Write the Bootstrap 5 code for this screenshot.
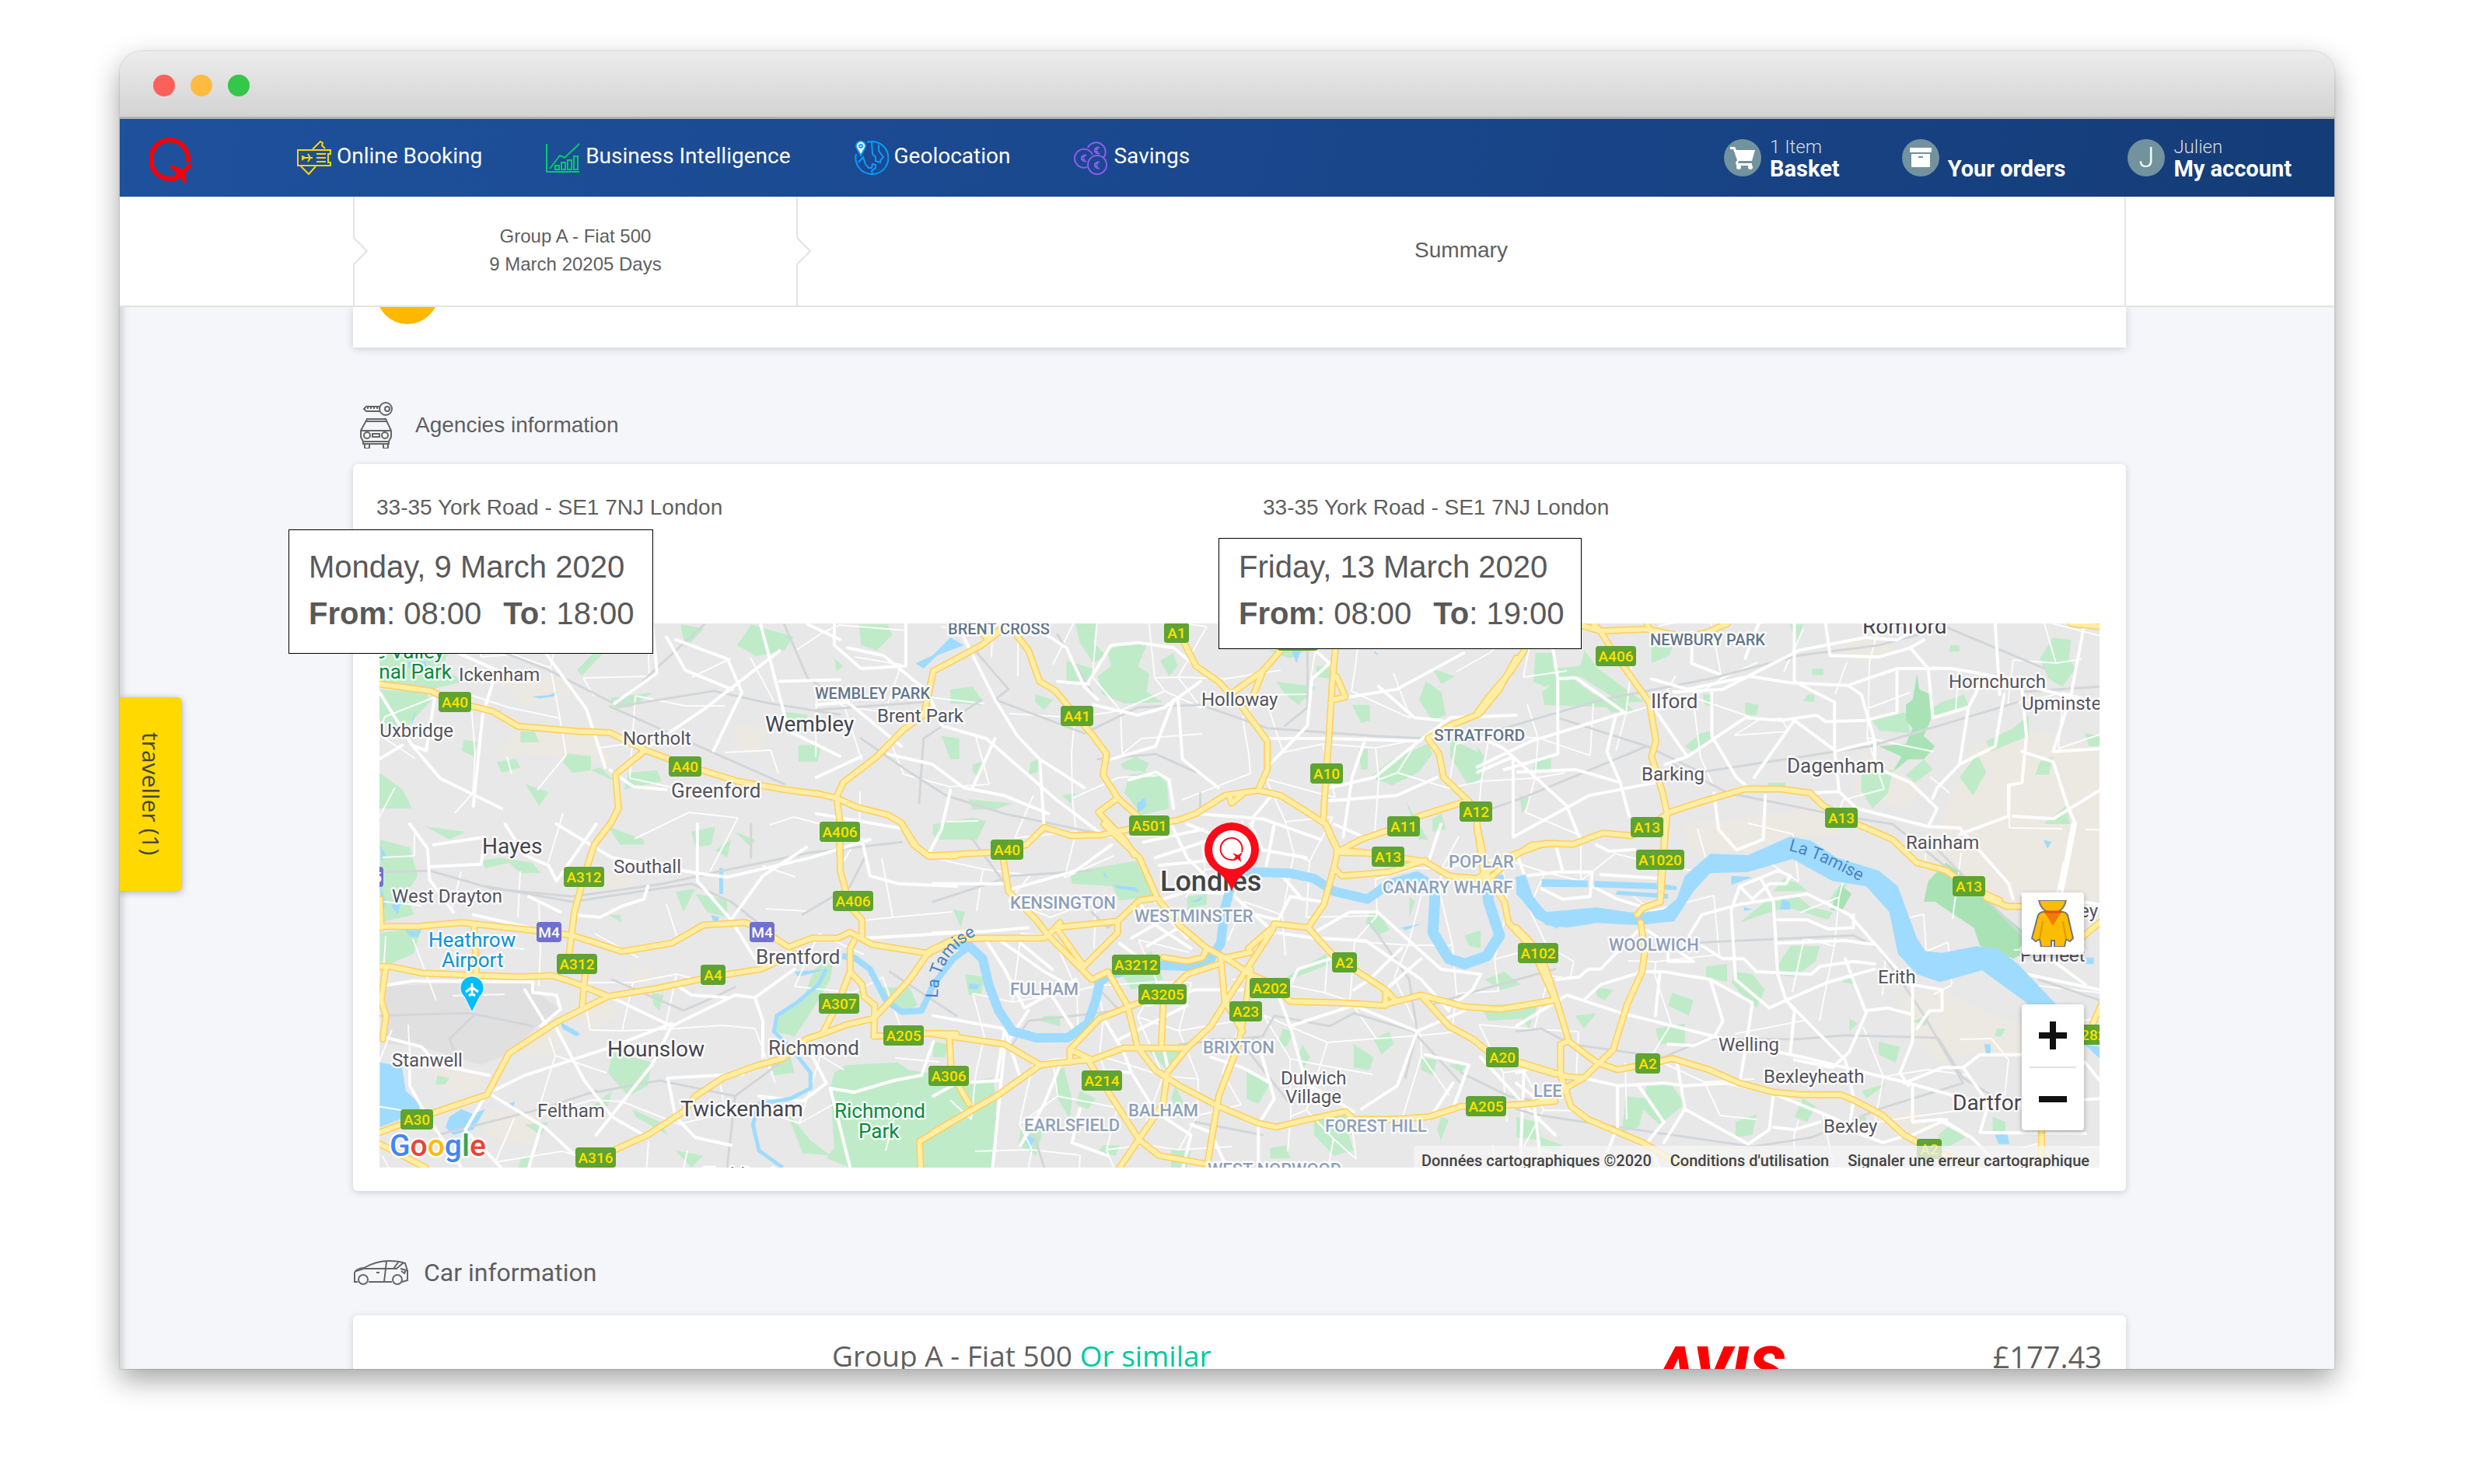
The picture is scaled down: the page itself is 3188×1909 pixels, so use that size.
<!DOCTYPE html>
<html lang="en">
<head>
<meta charset="utf-8">
<meta name="viewport" content="width=device-width, initial-scale=1">
<title>Booking summary</title>
<link href="https://cdn.jsdelivr.net/npm/bootstrap@5.3.0/dist/css/bootstrap.min.css" rel="stylesheet">
<style>
body{background:#fff;color:#5f5f5f;font-family:"Liberation Sans",Arial,sans-serif;font-size:28px;line-height:42px}
.desk{height:100vh;padding:66px 186px 148px 154px}
.win{border-radius:28px 28px 0 0;box-shadow:0 14px 36px rgba(0,0,0,.36),0 0 2px rgba(0,0,0,.3)}
.titlebar{height:87px;padding:4px 43px 0;gap:20px;background:linear-gradient(#ececec,#d3d3d3);border-bottom:3px solid #b3b3b3}
.dot{width:28px;height:28px;border-radius:50%;background:#fc605b}
.dot-min{background:#fdbc40}.dot-max{background:#34c749}
.topnav{height:100px;padding:0 55px 0 38px;background:linear-gradient(105deg,#1e519c,#19458a 60%,#143c77);font-family:Roboto,sans-serif}
.topnav a{color:#fff;text-decoration:none}
.mainlinks{margin-left:134px;gap:82px}
.mainlinks a{gap:7px;line-height:28px}
.mainlinks span{padding-bottom:5px}
.userlinks{gap:80px}
.userlinks a{gap:11px;font-size:29px;line-height:28px;font-weight:700}
.userlinks small{font-size:24px;font-weight:300;color:#d8dbe2;display:block}
.disc{width:48px;height:48px;border-radius:50%;background:#72929e}
.initial{font-size:36px;font-weight:300}
.steps{border-bottom:2px solid #e3e3e3;background:#fff;padding-left:32px;height:142px}
.wrap{width:100%;max-width:2280px;margin:0 auto;display:flow-root}
.steps .wrap{display:flex}
.step{border-left:2px solid #e4e4e4;text-align:center;padding-bottom:2px}
.step-last{border-right:2px solid #e4e4e4}
.step svg{position:absolute;left:-2px;top:50%;margin-top:-17px}
.step p{font-size:24px;line-height:36px;margin:0}
.view{background:#f5f6fa;box-shadow:inset 10px 0 10px -6px rgba(0,0,0,.16);padding-left:32px}
.panel{background:#fff;border-radius:6px;box-shadow:0 2px 10px rgba(30,30,60,.18)}
.panel-top{display:flow-root;height:52px;padding:0 30px;border-radius:0}
.coin{width:80px;height:80px;border-radius:50%;background:#ffb700;margin-top:-58px}
.sect{height:60px;margin:70px 0 20px}
.sect h2{font-size:28px;line-height:42px;margin:0;font-weight:400}
.sect-car{height:70px;gap:20px}
.sect-car h2{font-family:Roboto,sans-serif;font-size:32px}
.agency{height:205px;padding:35px 30px 0}
.datebox{position:absolute;z-index:2;top:84px;left:-83px;border:1px solid #000;background:#fff;color:#595959;font-size:40px;line-height:60px;padding:17px 25px 21px;width:469px;white-space:nowrap}
.datebox-b{top:95px;left:-27px;padding:6px 25px 15px;width:467px}
.datebox span{margin-left:28px}
.mapbox{margin:0 34px;height:700px;background:#e8e8e8;overflow:hidden}
.mapbox>svg{width:100%;height:100%;display:block}
.mapwrap{padding-bottom:30px}
.ctl{position:absolute;right:20px;width:80px;background:#fff;border-radius:4px;box-shadow:0 2px 6px rgba(0,0,0,.3)}
.ctl button{border:0;background:none;width:80px;height:80px;padding:0;display:flex;align-items:center;justify-content:center}
.ctl-man{top:346px}.ctl-zoom{top:490px}
.ctl hr{margin:0 10px;border-top:2px solid #e2e2e2;opacity:1}
.credits{position:absolute;right:0;bottom:0;height:28px;padding:0 13px 0 10px;gap:24px;background:rgba(245,245,245,.75);font:500 20px/38px Roboto,sans-serif}
.credits a,.credits span{color:#444;text-decoration:none;white-space:nowrap}
.tab{position:absolute;left:0;top:831px;width:80px;height:249px;border:0;border-radius:0 6px 6px 0;background:#ffd900;color:#444;font:30px/80px "Open Sans",sans-serif;writing-mode:vertical-rl;text-align:center;box-shadow:0 2px 10px rgba(0,0,0,.3);padding:0 0 0;z-index:3}
.offer{min-height:160px;padding:24px 31px 0 616px;font-family:"Open Sans",sans-serif;font-size:37px;line-height:56px}
.offer em{font-style:normal;color:#00c9a0}
.offer b{font:italic 900 76px/56px Roboto,sans-serif;color:#f00;margin-left:auto;padding:16px 268px 0 0}
.offer data{font-size:38px;padding-top:1px}
/* map layers */
.mapbox path{vector-effect:non-scaling-stroke}
.casing{stroke:#ffcd5c;stroke-width:9px}.mainroad{stroke:#ffeea3;stroke-width:6px}
.casing,.mainroad,.street,.rail{fill:none;stroke-linejoin:round;stroke-linecap:round}
.street{stroke:#fff;stroke-width:4px}.lane{fill:none;stroke:#fff;stroke-width:2px;opacity:.9}
.rail{stroke:#d3d6d9;stroke-width:3px}
.river{fill:none;stroke:#9fdbff;stroke-linejoin:round}
.lake{fill:#9fdbff}.park{fill:#c0ebc9}.wood{fill:#a9e3b5}.sand{fill:#ece9e2}.field{fill:#e0e0e0}
.mapbox text{font-family:Roboto,sans-serif;paint-order:stroke;stroke:#fff;stroke-opacity:.85;stroke-width:5px;stroke-linejoin:round;fill:#55555f}
.mapbox text.town{fill:#454550;font-size:28px}.mapbox text.mid{font-size:26px}.mapbox text.vil{font-size:24px}
.mapbox text.caps{font-size:20px;font-weight:500;fill:#62758c}
.mapbox text.caps-big{font-size:21px}
.mapbox text.dist{font-size:22px;font-weight:500;fill:#8e9fba}
.mapbox text.green{font-size:26px;fill:#0a8a3c}.mapbox text.air{font-size:26px;fill:#0a94d6}
.mapbox text.city{font-size:36px;font-weight:500;fill:#444}
.mapbox text.water{font-size:22px;fill:#4b83c6;stroke:none}
.mapbox text.plate{font-size:19px;font-weight:500;fill:#ffe100;stroke:none;text-anchor:middle}
.mapbox text.plate-m{fill:#fff}
.mapbox text.brand{font-size:39px;font-weight:500}
</style>
<script src="https://cdn.jsdelivr.net/npm/bootstrap@5.3.0/dist/js/bootstrap.bundle.min.js"></script>
</head>
<body>
<div class="desk d-flex flex-column">
<div class="win d-flex flex-column flex-grow-1 overflow-hidden position-relative">
  <div class="titlebar d-flex align-items-center flex-shrink-0"><i class="dot"></i><i class="dot dot-min"></i><i class="dot dot-max"></i></div>

  <nav class="topnav d-flex align-items-center flex-shrink-0" aria-label="Main">
    <a href="#" class="d-flex pt-2" aria-label="Home"><svg width="56" height="60" viewBox="0 0 56 60"><path d="M50 29A24 25 0 1 0 26 53Q35 54 41 47" fill="none" stroke="#f70009" stroke-width="6" stroke-linecap="round"/><path d="M28 36q2-1 4 0l10 5 6-5q4-4 6-2 2 3-2 6l-6 5 2 12-3 2-6-10-7 4-2-1 5-7-8-6q-1-2 1-3z" fill="#f70009"/></svg></a>
    <div class="mainlinks d-flex">
      <a href="#" class="d-flex align-items-center"><svg width="44" height="46" viewBox="0 0 44 46" fill="none" stroke="#ffd400" stroke-width="2"><path d="M1 13H43V18H40V29H43V33H1ZM20 12L30 2L33 4L32 7L36 11M5 34L15 44L24 34M25 18H37M25 23H37M25 28H37"/><path d="M7 21L10 23L7 25V20ZM7 23H20M14 18L17 23L14 28"/></svg><span>Online Booking</span></a>
      <a href="#" class="d-flex align-items-center"><svg width="44" height="40" viewBox="0 0 44 40" fill="none" stroke="#00cc66" stroke-width="2"><path d="M1 2V38H43M5 34L18 17L24 20L43 2M12 35V30H17V35ZM20 35V26H25V35ZM28 35V23H33V35ZM36 35V18H41V35Z"/></svg><span>Business Intelligence</span></a>
      <a href="#" class="d-flex align-items-center"><svg width="44" height="46" viewBox="0 0 44 46" fill="none" stroke="#0a9bff" stroke-width="2"><path d="M16 3A21 21 0 1 1 2 18M22 3L23 18L27 22V27L33 29L34 25L37 22L31 14V6M5 29L11 22L14 31L18 36H22L23 31L27 32V36L22 40L23 44"/><path d="M8 20L3 11A6 6 0 1 1 13 11Z" fill="#fff"/><circle cx="8" cy="8" r="2"/></svg><span>Geolocation</span></a>
      <a href="#" class="d-flex align-items-center"><svg width="44" height="46" viewBox="0 0 44 46" fill="none" stroke="#8b5cf0" stroke-width="2"><circle cx="30" cy="32" r="12"/><path d="M18 10A12 12 0 1 1 38 23M17 35A12 12 0 1 1 24 19"/><path d="M33 10A4 4 0 1 0 33 17M26 12H31M26 15H31M16 20A4 4 0 1 0 16 27M9 22H14M9 25H14M33 29A4 4 0 1 0 33 36M26 31H31M26 34H31"/></svg><span>Savings</span></a>
    </div>
    <div class="userlinks d-flex ms-auto">
      <a href="#" class="d-flex align-items-center"><span class="disc d-flex align-items-center justify-content-center"><svg width="34" height="30" viewBox="0 0 34 30" fill="#fff"><path d="M1 1H7L9 5H33L29 19H12L11 22H29V25H9L8 21L10 18L5 4H1Z"/><circle cx="12" cy="27" r="3"/><circle cx="27" cy="27" r="3"/></svg></span><span><small>1 Item</small>Basket</span></a>
      <a href="#" class="d-flex align-items-center"><span class="disc d-flex align-items-center justify-content-center"><svg width="28" height="26" viewBox="0 0 28 26" fill="#fff"><rect width="28" height="6" rx="1"/><path d="M2 8H26V24Q26 25 25 25H3Q2 25 2 24ZM11 11V13H17V11Z" fill-rule="evenodd"/></svg></span><span><small>&nbsp;</small>Your orders</span></a>
      <a href="#" class="d-flex align-items-center"><span class="disc initial d-flex align-items-center justify-content-center">J</span><span><small>Julien</small>My account</span></a>
    </div>
  </nav>

  <div class="steps flex-shrink-0"><div class="wrap row g-0 h-100">
    <div class="col-3 step position-relative d-flex flex-column justify-content-center"><svg width="20" height="34" viewBox="0 0 20 34"><path d="M0 0H2V34H0Z" fill="#fff"/><path d="M1 0L18 17L1 34" fill="none" stroke="#e2e2e2" stroke-width="2"/></svg><p>Group A - Fiat 500</p><p>9 March 20205 Days</p></div>
    <div class="col-9 step step-last position-relative d-flex align-items-center justify-content-center"><svg width="20" height="34" viewBox="0 0 20 34"><path d="M0 0H2V34H0Z" fill="#fff"/><path d="M1 0L18 17L1 34" fill="none" stroke="#e2e2e2" stroke-width="2"/></svg><span>Summary</span></div>
  </div></div>

  <main class="view flex-grow-1 overflow-hidden">
    <div class="wrap">
      <div class="panel panel-top"><div class="coin"></div></div>

      <div class="sect d-flex align-items-center">
        <svg width="80" height="60" viewBox="0 0 80 60" fill="none" stroke="#666" stroke-width="2"><circle cx="42" cy="9" r="8"/><circle cx="44" cy="9" r="3"/><path d="M35 6H17L14 9L17 12H35M19 6V9M23 6V9M27 6V9M31 6V9M18 22H42L49 37V45L46 51H13L10 45V37ZM16 25H44M10 37H49M13 51V54H46V51M15 54V58Q15 60 17 60H19Q21 60 21 58V54M39 54V58Q39 60 41 60H43Q45 60 45 58V54M25 41H34V45H25Z"/><circle cx="18" cy="43" r="4"/><circle cx="41" cy="43" r="4"/></svg>
        <h2>Agencies information</h2>
      </div>

      <div class="panel mapwrap">
        <div class="row g-0">
          <div class="col-6 agency position-relative">33-35 York Road - SE1 7NJ London
            <div class="datebox"><div>Monday, 9 March 2020</div><div><b>From</b>: 08:00<span><b>To</b>: 18:00</span></div></div></div>
          <div class="col-6 agency position-relative">33-35 York Road - SE1 7NJ London
            <div class="datebox datebox-b"><div>Friday, 13 March 2020</div><div><b>From</b>: 08:00<span><b>To</b>: 19:00</span></div></div></div>
        </div>
        <div class="mapbox position-relative" id="map">
<svg viewBox="488 802 2212 700" preserveAspectRatio="xMidYMid slice" role="img" aria-label="Map of London">
<defs>
<g id="trunk">
<g transform="translate(130 480) scale(.6059 .3571)"><path d="M591 1120L700 1145L750 1185L800 1205L830 1218L885 1272L1010 1290L1080 1295L1155 1358L1240 1412L1350 1470L1450 1500L1518 1515M1155 1358L1092 1445L1098 1568L1081 1624"/></g>
<g transform="translate(1050 600) scale(.574 .3333)"><path d="M350 606L380 660L440 606M430 610L370 690L262 790L248 900L240 960L195 1015L135 1120L60 1220L45 1275L52 1370V1500M0 1262L45 1280L90 1315L160 1345L190 1375L225 1470L250 1503L392 1490L430 1478L470 1460L510 1393L570 1425L640 1422L700 1400L745 1385L810 1365L850 1340L915 1270L990 1250L1040 1270L1100 1335L1140 1380L1155 1440L1170 1490M450 655L475 710L500 830L535 865L580 960L620 1040L650 1110L642 1190L675 1280L720 1350L745 1385M675 1280L632 1335L690 1440L712 1500M815 650L850 770L900 830L950 920L1010 1060V1170L990 1250M1040 710L1000 790L935 870M1000 790L975 900L950 920M1162 710L1155 850L1148 1050L1142 1180L1135 1370M1165 810L1185 890L1160 900M1568 740L1530 860L1485 955L1420 1000L1370 1050L1395 1110L1405 1200L1460 1290L1480 1330V1400L1490 1500M1460 1290L1350 1350L1315 1385L1220 1440L1165 1490L1300 1495M925 1270L930 1300L955 1265"/></g>
<g transform="translate(1900 760) scale(.574 .3333)"><path d="M235 135L275 155L380 148L470 180L515 160L560 126M275 155L310 250L385 430L400 580L390 640L415 780L425 860L420 950L410 1200M260 126L275 155M380 126L385 148M1330 126L1394 138M87 470M0 470L25 410L75 310L105 230M0 910L15 1110M0 1110L70 1025L150 975L215 978L280 935L345 945L400 890L430 855L500 815L600 765L680 765L745 780L775 830L850 900L930 960L985 1050L1050 1080L1100 1140L1170 1195"/></g>
<g transform="translate(1950 1060) scale(.5421 .3333)"><path d="M1115 285L1165 318H1210M352 0L350 100L342 210V300L300 325L287 350M295 380L305 490L298 570L262 700L230 870L160 980L105 1030M0 400L30 450L60 510L95 680L125 840L190 920L240 948L320 925L370 905L460 950L530 1000L610 1035L680 1045H770L800 1065L870 1125L920 1200L985 1260L1100 1326M0 705L95 678M0 915L120 975L160 980M120 840L105 850V970L130 1090L170 1140L300 1230L400 1326M0 1085L45 1078L120 1025M1384 380L1340 440M1390 690L1365 780M1246 1180V1326"/></g>
<g transform="translate(430 1060) scale(.5102 .3333)"><path d="M695 0L655 80L630 200L605 340L592 500M115 395H210L320 380L500 410L600 430L725 492L850 460L930 390L1035 380L1090 420L1145 475L1205 440H1270L1300 418L1355 465L1500 500M632 580L625 700M115 550H140L220 575L370 585L470 590L550 585L600 610L690 665L810 635L950 590L1075 560L1160 500M352 390L358 580M690 665L560 765L440 885L400 1000L385 1045L220 1130L115 1190M115 290L118 400M130 550L118 680L130 740L122 830M115 1235L230 1326M710 1255L790 1200L880 1110L910 1050L980 980L1060 935L1130 905L1190 830L1240 805L1290 775L1360 750L1450 600L1500 490L1568 440M1230 810L1270 690L1300 570V480L1310 450M1300 570L1330 620L1335 665L1362 700L1360 820L1480 808L1568 810M1275 0V180L1300 320L1330 370V430M1430 0L1460 80L1500 125L1568 122M1550 810L1555 960L1600 1080M1600 1110L1475 1225L1478 1326"/></g>
<g transform="translate(1200 1060) scale(.5102 .3333)"><path d="M175 120L190 260L260 370L290 430L400 600L440 570M0 490L60 445L130 440H280L310 400L465 375L520 295L565 285M430 0L520 130L565 285L620 390L690 480L740 520L800 580L860 620L900 685L1030 690L1130 700L1230 660L1340 705L1430 715L1568 680M310 400L380 550L465 420V375M580 515L640 530L680 515L690 480M720 540L640 580L600 640L520 690L420 750L345 870V920M440 570L490 700L515 860L560 950L620 1010L720 1090L820 1155L865 1170L930 1145L1040 1110L1060 1140H1155L1250 1130L1330 1090L1450 1085L1568 1070M580 700L575 860M400 910L480 865H640L700 780L740 680L855 410L860 385L945 400L985 310L1010 170M0 810L180 850L270 930L390 910L440 1030L520 1220L570 1280L680 1310M640 865L590 960L580 1080L470 1326M725 520L735 680L780 800M800 560L790 680L770 850L720 1050L690 1326M945 400L1010 510L1140 640L1165 680M1140 640V700M1235 670L1300 780L1360 830L1400 880L1490 930L1568 965M0 1190L160 1050L270 930M725 520L800 495L795 480L855 400M990 0L1020 100L1010 170L1030 200L1150 185L1240 140M1020 100L1110 115L1240 145L1300 200L1400 215L1460 130L1510 80L1568 75M1400 215L1440 300L1450 380L1510 480L1568 680M1370 0L1400 215M345 870L400 910M290 430L320 380"/></g>
</g>
</defs>
<rect x="488" y="802" width="2212" height="700" fill="#e8e8e8"/>
<g transform="translate(1900 760) scale(.574 .3333)">
<path class="sand" d="M1180 560L1280 540L1394 640V1200H1020L980 1000L1040 880L1100 620ZM790 210L900 170L940 230L860 290ZM460 900L620 870L780 830L820 940L700 950L560 1010L480 1000ZM860 600L1000 760L960 840L840 790Z"/>
<path class="park" d="M180 340L215 340L260 400L330 430L350 460L300 470L290 450L150 440L145 390ZM130 240L170 240L170 300L230 290L240 230L270 300L310 350L340 390L375 430L320 430L230 330L150 370L125 350ZM390 190L440 200L430 250L390 280ZM1290 180L1330 190L1325 260L1340 300L1310 370L1280 340L1260 260ZM505 400H530V450L510 440ZM740 400H755V430L730 425ZM600 430L630 440L625 480L600 480ZM465 600L500 550L525 540L520 590L480 620ZM880 490L960 470L970 550L900 540ZM1000 470L1040 430L1090 400L1100 440L1030 480ZM1000 650L1020 690L980 740L960 710ZM860 710L930 690L920 780L885 840L860 770ZM1120 630L1140 700L1110 790L1080 720ZM1200 530L1235 480V560L1150 620L1140 580ZM1320 830L1330 920L1310 980L1260 910ZM130 640H165V690L125 700ZM95 790L120 800L100 860ZM1260 660L1290 640L1280 710L1250 710ZM1360 550L1394 560V600H1370ZM0 600L15 640L5 700ZM700 130H730L715 210ZM750 300H775V325H750ZM1060 210H1080V235H1055ZM650 740H690V760H650ZM810 1140L830 1130L800 1200H785Z"/>
<path class="wood" d="M985 320L990 380L1015 400L1020 480L1000 560L1025 600L1000 650L965 650L930 700L950 640L900 600L960 590L975 530L960 500V440L975 420ZM1050 1050L1100 1110L1080 1200H1000L1010 1120Z"/></g>
<g transform="translate(1050 600) scale(.574 .3333)">
<path class="park" d="M690 680L740 690L720 770L745 800L740 870L775 910L690 915L640 880L630 810L660 770L650 710ZM580 606H630L620 680L650 730L620 760L590 680ZM560 750L620 780L610 830L560 830ZM95 610H160L170 650L135 710L100 690ZM800 720L810 770L790 810L770 750ZM300 860L350 850L370 900V920L300 915ZM490 880L530 900L510 940L490 910ZM280 1040L320 1050V1130H300ZM350 1150L370 1140L365 1200L350 1180ZM480 1140L500 1130L495 1180L475 1190ZM340 1285L440 1300L400 1325H350ZM265 1380L350 1355L380 1370L360 1440L270 1440L260 1415ZM700 1190L760 1175L785 1220L790 1320L730 1345L690 1260ZM680 1150L715 1120L745 1145L735 1180L690 1170ZM550 1270L580 1260L570 1300ZM1365 830L1400 870L1410 960L1380 980L1350 900ZM1030 830L1120 850L1080 920L1050 880ZM1120 770H1150V820L1120 810ZM1200 920L1240 920V980L1220 990ZM1380 780L1430 810L1400 840ZM1370 1070L1380 1110L1350 1180L1290 1230L1240 1200L1290 1130ZM1420 1050L1490 1110L1495 1200L1460 1230L1420 1120ZM1320 1290L1370 1440H1350ZM1215 1090H1235V1170H1220ZM1380 1360L1400 1340L1410 1400L1380 1410ZM1010 710H1100L1060 740ZM40 740L60 770L45 790Z"/>
<path class="lake" d="M300 660L330 690L270 730L240 780L222 760L260 730ZM735 1280L740 1310L720 1340L718 1300ZM1065 710H1085L1075 760ZM1250 710L1260 730L1250 720Z"/></g>
<g transform="translate(130 480) scale(.6059 .3571)">
<path class="sand" d="M840 1100L980 1080L1000 1160L900 1200ZM880 1290L1050 1300L1090 1410L900 1370L840 1370ZM1350 1260L1420 1280L1390 1380L1340 1340Z"/>
<path class="park" d="M591 1000H740L720 1060L770 1110L700 1140L591 1110ZM591 1140L690 1150L700 1180L640 1290L591 1250ZM1380 905L1470 950L1450 1000L1390 1020L1350 980ZM1230 905L1280 920L1240 990ZM990 1370L1040 1380V1430L1000 1440L980 1400ZM890 1290L920 1290L930 1330H890ZM770 1320L800 1330L790 1380L765 1360ZM840 1400L880 1390L890 1420L850 1440ZM1120 1440L1180 1430L1190 1470L1110 1500ZM1060 1420L1090 1470L1040 1430ZM900 1480L950 1510L930 1560ZM1450 1220L1500 1230L1490 1290L1450 1270ZM1480 1340H1530L1520 1400H1480ZM591 1440L640 1500L660 1568H591ZM1080 1170L1170 1150L1130 1200L1090 1210ZM1050 1000L1065 1010L1020 1090L1010 1070Z"/>
<path class="lake" d="M915 1165L950 1160L970 1145L960 1165L930 1172ZM670 1210L655 1290L662 1240ZM850 1210L840 1245L846 1215ZM652 1040H690V1060H652Z"/></g>
<g transform="translate(430 1060) scale(.5102 .3333)">
<path class="field" d="M125 625L500 605L510 650L570 715L520 770L440 885L370 930L220 860L135 850Z"/>
<path class="sand" d="M600 660L690 680L720 740L640 790L600 730ZM500 800L560 770L590 830L540 900L480 890ZM640 170L760 190L740 260L650 270ZM380 1100L520 1130L500 1240L380 1200ZM230 950L340 940L380 1010L300 1060ZM740 560L800 550V620L740 610Z"/>
<path class="park" d="M115 60L190 90L210 200L180 270L200 350L115 380ZM115 420L220 400L200 500L140 540L115 530ZM1210 560L1260 500L1250 600L1200 730L1160 820L1110 800L1120 730L1180 680ZM1260 960L1290 930L1420 920L1450 950L1500 960L1568 1060V1326H1300L1240 1290L1260 1250L1250 1020ZM910 270L990 290V360L940 340ZM700 880L800 920L790 1010L740 1050L690 960ZM690 10L780 60L780 80H720ZM900 30L960 10L950 80L910 90ZM960 100L1000 60L990 130ZM860 260L910 250L880 340ZM690 350L720 350L725 380ZM800 650L830 660L820 720L805 700ZM260 970L290 980L280 1005H255ZM480 1160L540 1150L520 1200ZM1370 630H1450L1470 700L1430 730L1390 700ZM1100 930L1150 900L1160 960L1110 970ZM640 1100L700 1030L690 1090ZM750 1100L820 1150L840 1200L760 1130ZM470 1290L500 1280L490 1326H465ZM370 140L420 130L500 150L520 190H470L440 150L380 170ZM1140 1110L1200 1220L1250 1280L1180 1270ZM720 50L760 60L740 70ZM230 10L330 30L290 60ZM1010 30L1060 60L1050 90ZM860 1260L930 1280L900 1326Z"/>
<path class="lake" d="M115 920L170 935L180 1030L215 1080L215 1110L115 1170ZM290 1130L320 1100L350 1120L380 1100L350 1180L300 1200L280 1170ZM570 765L600 790L620 810L610 820L575 790ZM115 240L130 300L120 340ZM150 260L170 290L160 350L145 320ZM180 410L220 410L210 435H190ZM950 350L970 360L960 400ZM970 170H980V270H970ZM440 1080L455 1070L450 1100ZM115 80L130 120L120 140ZM1160 570L1240 560L1170 590Z"/></g>
<g transform="translate(1200 1060) scale(.5102 .3333)">
<path class="park" d="M345 185L520 140L555 230L565 280L470 295L450 240L350 230ZM500 540L550 490L570 560L580 600L500 640L480 590ZM540 870H640L590 950ZM80 580L130 590L120 660H90ZM310 950L330 940L350 1060L345 1140L310 1050ZM0 1010L150 980L160 1070L155 1326H0ZM0 840L40 850L30 900H0ZM890 590L990 500L1000 540L950 570L900 600ZM1100 340L1130 350L1150 410L1120 430L1090 380ZM1110 830L1150 800L1160 850L1130 890ZM1060 850L1110 900L1100 950L1060 940ZM790 950L850 1000L820 1080L790 1060ZM930 850L950 900L930 950L920 900ZM1380 700L1530 690L1500 750L1400 760ZM1440 570L1480 620L1430 640L1390 600ZM1230 900L1270 910L1260 970L1230 950ZM1300 930L1350 920L1330 960ZM610 1010L640 1100L620 1130L600 1060ZM220 1180L280 1160L260 1280L215 1240ZM960 1120H1050L1040 1160L1060 1260L1010 1280L960 1200ZM430 1240L470 1240L460 1280L410 1270ZM850 1250L890 1240L900 1290L850 1290ZM1280 1130L1300 1140L1280 1220L1270 1180ZM1350 1080L1370 1070L1360 1110ZM0 0H70L60 60L0 30ZM640 280L690 270V310L640 330ZM50 330L80 340L70 400ZM1200 280L1215 300L1200 360ZM370 1030L410 1060L390 1100L360 1080ZM1340 430L1380 410V480L1350 470ZM600 1250L650 1260L640 1326H600ZM280 740L320 740V780L270 760ZM880 790L910 800L890 860L870 850Z"/>
<path class="lake" d="M455 235L510 245L520 262L465 250ZM90 615L120 620L110 640L90 635ZM650 300L680 280L670 300ZM1180 400L1230 385L1190 410ZM230 1200L260 1215L240 1250ZM970 530L990 520L985 540ZM550 605L565 610L555 625ZM430 180L440 210L430 200Z"/></g>
<g transform="translate(1950 1060) scale(.5421 .3333)">
<path class="sand" d="M905 660L1010 640L1080 700L1200 780V880H1080L1000 920L950 830ZM480 40L640 20L560 110L480 100ZM1000 100L960 60H1200V200L1060 190ZM830 1120L950 1100L1000 1180L900 1200ZM380 1240L520 1250L500 1326H400ZM1100 0H1384V280H1200L1150 200Z"/>
<path class="park" d="M590 300L660 270L700 320L750 340L740 370L640 320L530 380ZM635 210L670 230L690 260L610 260ZM450 550L500 540V610L450 590ZM520 570L560 580L590 640L570 710L530 650L510 610ZM630 520L650 470L720 470L710 530L660 590L610 580ZM370 650L420 680L410 740L360 700ZM330 790L400 770V850H340ZM310 1000L370 1010L400 1080L340 1160L300 1100ZM260 1050L310 1060L290 1170L250 1190ZM190 630L230 640L210 680L190 665ZM140 740L190 730L160 790ZM860 840L910 860L900 920L860 890ZM940 760L980 740L970 780ZM680 1060L710 1090L690 1150L660 1130ZM790 1140L830 1130V1170H790ZM520 1150L570 1120L560 1200L520 1210ZM1140 790L1160 790L1150 820H1135ZM1130 1130L1160 1150V1210L1130 1190ZM770 610L800 590L810 620ZM0 720L50 700L30 790ZM0 1130L50 1150L60 1220L0 1210ZM60 1210L110 1240L90 1270L50 1240ZM1030 1160L1065 1210L1010 1260L1000 1200ZM820 1030L880 1000L830 1060ZM790 750L810 770L790 800Z"/>
<path class="wood" d="M1020 150L1045 200L1090 250L1110 290L1200 410V500L1180 520L1100 470L1085 400L970 275L990 200ZM770 235L795 270L770 340L745 330Z"/></g>
<g id="lanes"></g>
<g transform="translate(430 1060) scale(.5102 .3333)"><path class="rail" d="M115 185L240 180L400 250L600 280L830 230L950 190L1200 110L1430 70M380 240L600 300L900 230L1000 300L1100 420M700 600L880 720L940 680L1010 630M115 740L340 730L500 780M350 740L290 830L320 940M640 1040L820 990L1010 1050L1090 960L1190 840M260 1200L520 1100L660 1030M990 1326L1010 1050M1180 350L1300 240L1340 120M1400 570L1568 740M1050 0V130"/><path class="street" d="M190 0L235 95L240 215L300 340M240 165L370 155L380 50L250 80M430 0L480 120L540 160L560 220L660 0M560 0L700 130L915 190L990 205L1200 130L1350 60M915 0V220L1000 370L1060 520M790 240L780 290L720 320L670 360L600 350M490 280L570 340M350 350L490 400M120 625L200 605L500 610V650L560 660L570 715L520 780M120 820L220 860L260 930L390 970M700 670L850 780L1010 660L1060 670L1160 560M840 980L1030 965M860 620L900 660L990 670M400 1030L480 970L700 860L850 770M390 1040L530 1170L600 1270M560 790L630 990L700 1130L790 1210M540 790L480 640M660 1200L800 930L850 780M840 980L860 1130L910 1210L1000 1240M1060 670L1080 760V900M1250 1020L1310 1035L1410 990L1480 970L1510 840M1250 1020L1300 1326M1190 850L1240 1000L1180 1070L1070 1050M1000 370L1080 200L1190 90M1330 60L1350 200L1420 230L1568 240M1340 440L1568 420M190 950V1010L230 1120L320 1326M380 1050L330 1180L420 1326M520 1170L490 1326"/></g>
<g transform="translate(1050 600) scale(.574 .3333)"><path class="rail" d="M350 700L430 860L400 900L600 1030L720 930L860 920L1010 1010L1250 1040L1480 1060M100 1050L200 1170L290 1270L420 1340L640 1420M0 940L240 910M630 1130L760 1110L850 1180M860 1260V1340M1100 690V930L1050 1000M370 900L240 1050L230 1300M540 650L620 880"/><path class="street" d="M40 606V690L100 780L200 770V606M70 700L150 730L250 870L280 1000L380 1050L540 1290L640 1420M330 660L400 900L450 1040L500 1130L600 1240M480 610L560 700L600 850L630 900M610 830L660 690L720 680L800 700L920 870M540 830L610 840M620 920L720 960L780 930L860 830M0 920L70 910L190 1080M160 1110L260 1150L330 1240L420 1270L520 1340M400 1050L350 1240M0 1200L100 1120M660 1130L760 1080L800 900M810 900L820 1130L900 1240M700 1210L760 1180L790 1210L800 1320M1010 1050L1150 1050L1350 1060L1420 970L1568 960M1010 1160L1100 1000L1110 820L1150 760M1150 1240L1250 1200L1350 1060M1150 1290L1300 1270L1390 1200M1230 1050L1200 1200L1180 1430M1260 850L1340 970L1400 980M1160 900L1300 860L1450 720M1050 606L1150 760M850 1340L1000 1360L1130 1440M830 1380L960 1470M1020 1270L980 1350L970 1440M0 1340L200 1400M300 1250L280 1400L250 1500M500 1130L510 1390"/></g>
<g transform="translate(130 480) scale(.6059 .3571)"><path class="rail" d="M860 1010L950 1070L1100 1200L1300 1145L1420 1190L1568 1230M1080 1200L1250 1330L1450 1480M1280 905L1200 1030L1100 1190M1450 905L1500 1100L1568 1170"/><path class="street" d="M1400 905L1430 1100L1460 1290L1568 1380M1170 905L1180 1080L1090 1190M1220 960L1330 1030L1360 1150L1300 1360M1200 950L1240 1070L1340 1140M940 1000L1030 1210L1070 1420M760 1010L840 1070L810 1230L790 1560M591 1150L660 1340L690 1360L710 1150M660 1340L720 1460L850 1568M591 1390L640 1340M1150 1360L1280 1210L1440 1000M1080 1430L1130 1490L1200 1500M1500 905L1568 960M1440 1110L1568 1105"/></g>
<g transform="translate(1900 760) scale(.574 .3333)"><path class="rail" d="M0 560L280 420L520 340L720 250L900 210L1050 140L1270 300M180 490L380 600L500 700L880 600L1210 430M430 660L560 780L820 870L930 900L1060 1080M1220 390L1394 370M0 860L100 800L380 600"/><path class="street" d="M440 390L550 380L720 230L870 180L940 190L1010 126M390 340L470 380L610 330L700 355L830 365L940 300H1060L1130 320L1394 440M480 160V280L540 320M630 126L600 260M710 126V350L800 430V620L890 580L860 400L830 365M780 126L790 250L900 255L970 220L1000 190M970 220L1010 300L1020 490L1100 450L1130 350M600 490L680 500L760 480L780 505L870 500L940 470V310M600 490L470 640L420 670M525 390V560L580 720L600 750M710 500L800 615L810 770M710 500L620 720M390 440L470 640M890 580V680L970 740L1030 840L1010 910M750 780L810 775L850 840L1010 910L1080 915L1190 1130L1200 1190M1100 450L1080 670L1030 760L1020 800M1180 400L1160 600L1080 670M1220 380L1230 560L1220 740L1190 750V870L1080 940M1200 870L1290 880L1394 770M1220 620L1290 660L1320 820L1340 900L1310 1160M1290 620L1394 610M530 780L540 920L580 1000L640 960L645 790M160 126L180 340L220 335L330 470L120 580L0 680M180 340V630L60 690M0 700L80 640V950L250 790L400 740M90 700L220 690L320 740M310 480L290 620L320 740L340 870M0 560L60 610L200 830L230 960M1360 126L1330 400L1290 620M1160 126L1170 400"/></g>
<g transform="translate(1200 1060) scale(.5102 .3333)"><path class="rail" d="M0 300L200 200L400 180M100 60L190 250M400 340L440 400L500 330M200 850L240 760L470 720L420 640L330 450M620 850L830 820L860 740L1000 780L1060 730L1210 800L1330 1000M700 830L820 830M1100 380L1200 600L1220 800L1190 980M1330 960L1450 1050L1568 1080M280 1326L250 1180M780 850L900 1080M660 1150L830 1200M1568 560L1380 640L1250 700"/><path class="street" d="M0 740L180 790L220 980M180 790L160 980M0 230H190M0 420L130 415L240 400M130 440L180 560L230 710L360 600M160 440L280 570L340 620M220 460L300 560M240 720L180 860L150 1326M370 830L290 640M320 930L280 1080L220 1240M430 750L480 880L500 960L430 950M500 960L560 1110L650 1200L630 1326M540 700L660 640L780 640M470 830L640 700M580 860L600 1000M860 620L900 780L940 1000L1060 1110M820 850L860 1060L820 1160V1326M700 900L780 940L850 1000M900 780L1060 700L1220 800L1170 1010L1080 1100M1220 800L1340 720M1240 890L1350 930L1310 1100M870 420L960 440L1090 450L1230 600L1300 720M970 410L1050 340H1120L1280 560L1380 580L1360 640L1300 710M1180 480L1100 600L1060 640M650 340L760 330L870 370L900 280L980 300M560 130L700 60L760 180M530 70L680 20M570 160L700 140M450 80L360 180L200 250M600 0L640 130L720 250M560 300L640 260L760 270M520 300L550 380L650 480M500 440L590 360L640 440M540 470L620 400M470 460L540 540M800 0L830 100L940 130M860 0L840 160M760 280L860 420M880 200L930 290M1380 900L1500 1100L1568 1200M1490 930L1480 1300M1250 1140L1310 1000M0 1050L60 1000L170 990M650 1160L700 1190L740 1326M370 1100L350 1230L440 1280M1040 500L920 560L900 620M1010 0L1100 60L1180 0M1280 0L1250 140M1140 640L1230 520"/></g>
<g transform="translate(1950 1060) scale(.5421 .3333)"><path class="rail" d="M0 800L60 790L130 850L350 900L450 830L670 830L780 815L1000 825L1060 980L1130 1050M400 460L800 430L860 480L960 720L1060 1000M0 1100L40 1120L200 1160L560 1245L700 1210L860 1100L1060 1000M1000 100L1200 430M1240 600L1384 680"/><path class="street" d="M0 110L20 200L100 185H180L175 280L110 290L60 250M180 240L240 290L300 320M200 195L340 210M95 90L110 180M190 80L220 105L280 98M410 430L440 350L530 310L690 270L790 350L860 480L940 630V840L910 960L930 1010M530 240L510 330M530 240L620 180L650 200L640 230H600L560 290ZM580 210L610 300L620 580L640 680L700 780L780 910L790 980L800 1060M440 470L490 520L540 520L570 570L700 580L720 550L800 530L850 540M620 370H690L740 405L800 400V350M0 780L120 660L250 730L470 820L560 860M95 600L150 590L170 560H200L290 410L310 410L420 530H360V450M290 570H350L460 600L560 690L550 800L530 1000M340 580L330 740M460 600L490 760L470 820L420 855L360 850M160 680L200 620L290 575M510 340L520 600L600 710L640 680L740 610L850 560M620 460L780 450L850 465M640 680L660 720L650 880M780 520L830 730L790 880L750 940L660 910M830 720L880 710L940 735M940 620L1010 640V720H980L950 790M560 860L680 900L830 960L930 1000L1130 1090L1384 1060M920 1000L1010 940H1060L1100 890H1200M1060 940L1120 1080L1100 1190L1350 1195M1020 1140L940 1200M1060 1190L1010 1140L940 1150V1010M160 980L240 1010L350 1000L400 1010L500 1000L610 1040L760 1140L830 1200M380 910L400 1100L500 1190L550 1235L600 1180L610 1040M240 1010L240 1170L200 1326M290 1010L350 1150L310 1230L340 1326M400 1100L350 1230M610 1170L660 1180L720 1150M800 1060L790 1180L870 1230L930 1200M0 1000L40 1050L60 1326M1200 270L1384 310M1210 580L1384 640M1250 500L1350 620M1320 0L1290 250M1350 920L1384 990M1000 1140L1080 1210L1150 1326M0 960L40 940"/>
<path class="lake" d="M0 200L70 340L190 322L290 345L350 330L380 290L400 200L460 115L550 120L650 48L700 65L760 130L860 180L905 240L950 440L970 490L1010 497L1090 472L1140 480L1190 540L1280 695H1215L1105 565L1005 610L950 580L905 500L885 340L830 240L750 220L655 135L550 185L460 190L420 260L375 375L290 390L190 382L120 400L70 390L0 270ZM60 212L170 218V244L60 242ZM185 220L330 228L380 240V255L185 244ZM240 258L360 270V288L235 272ZM510 200L560 205L510 235ZM1350 515H1370V540H1350ZM630 290L650 300V330H625ZM1347 850L1384 860V905ZM1110 850H1125V885H1115ZM1135 1200L1165 1200L1170 1235H1145ZM1250 60L1270 70L1260 95ZM540 320L560 330L540 335Z"/></g>
<g transform="translate(430 1060) scale(.5102 .3333)"><path class="river" stroke-width="5" d="M1240 560L1220 620L1165 690L1115 740L1108 800L1160 880L1200 960V1020L1150 1060L1070 1080L1055 1160L1070 1260L1130 1326"/><path class="river" stroke-width="8" d="M1280 510L1310 515L1350 560L1390 680L1430 725L1480 720L1510 620L1560 520L1600 475"/></g>
<g transform="translate(1200 1060) scale(.5102 .3333)"><path class="river" stroke-width="12" d="M50 465L90 470L125 520L140 620L165 720L200 800L260 825H340L390 770L410 680L420 610L445 580L480 570M570 545L650 550L700 520L725 460L735 330L750 240L800 185L900 190L960 210L1010 260L1095 290L1150 230L1220 200L1240 220"/><path class="river" stroke-width="14" d="M1235 215L1265 270L1260 420L1300 520L1340 540L1395 510L1428 430L1400 300L1395 230L1440 215M1480 200L1500 290L1530 350L1580 385"/></g>
<use href="#trunk" class="casing"/><use href="#trunk" class="mainroad"/>
<path id="bend1" d="M1206 1284Q1206 1230 1252 1205" fill="none"/><path id="bend2" d="M2300 1094Q2340 1104 2392 1134" fill="none"/>
<text class="water"><textPath href="#bend1">La Tamise</textPath></text><text class="water"><textPath href="#bend2">La Tamise</textPath></text>
<g id="names"></g>
<g id="plates"></g>
<path d="M607 1302L597 1282A15 15 0 1 1 617 1282Z" fill="#00bdff" stroke="#fff"/><path d="M607 1265V1281M599 1276L607 1270L615 1276M603 1281L607 1278L611 1281" stroke="#fff" stroke-width="3" fill="none"/>
<text class="brand" x="501" y="1487"><tspan fill="#4285f4">G</tspan><tspan fill="#ea4335">o</tspan><tspan fill="#fbbc05">o</tspan><tspan fill="#4285f4">g</tspan><tspan fill="#34a853">l</tspan><tspan fill="#ea4335">e</tspan></text>
<path d="M1584 1147Q1580 1131 1561 1118Q1549 1108 1549 1093A35 35 0 0 1 1619 1093Q1619 1108 1607 1118Q1588 1131 1584 1147Z" fill="#fb0a17"/><circle cx="1584" cy="1093" r="25" fill="#fff"/><path d="M1597 1096A14 14 0 1 0 1583 1106Q1589 1107 1592 1103" fill="none" stroke="#fb0a17" stroke-width="2"/><path d="M1585 1097L1592 1100L1598 1096L1595 1102L1596 1109L1591 1104L1586 1105L1589 1102Z" fill="#fb0a17"/>
</svg>
          <div class="ctl ctl-man"><button type="button" aria-label="Street View"><svg width="56" height="60" viewBox="0 0 56 60"><path d="M10 0H45Q43 10 36 14L44 16L47 19L54 49L50 53L45 50L43 60H30V52H26V60H13L11 50L6 53L1 49L9 19L12 16L19 14Q12 10 10 0Z" fill="#fbbc04" stroke="#777" stroke-width="2"/><path d="M15 27L11 50M41 27L45 50" stroke="#e09a00" stroke-width="2"/><path d="M17 15H39L28 33Z" fill="#f07c00"/><path d="M17 15H39" stroke="#e2500f" stroke-width="3"/></svg></button></div>
          <div class="ctl ctl-zoom"><button type="button" aria-label="Zoom in"><svg width="36" height="36"><path d="M0 14H36V22H0ZM14 0H22V36H14Z" fill="#111"/></svg></button><hr><button type="button" aria-label="Zoom out"><svg width="36" height="8"><path d="M0 0H36V8H0Z" fill="#111"/></svg></button></div>
          <div class="credits d-flex overflow-hidden"><span>Données cartographiques ©2020</span><a href="#">Conditions d'utilisation</a><a href="#">Signaler une erreur cartographique</a></div>
        </div>
      </div>

      <div class="sect sect-car d-flex align-items-center">
        <svg width="71" height="32" viewBox="0 0 71 32" fill="none" stroke="#666" stroke-width="2"><path d="M6 28H2V16Q4 11 14 10Q30 1 46 1Q58 1 67 4L70 14V26L63 28M20 28H50M14 11H56L64 4M43 2L40 28M4 14L14 11M52 11L58 3M61 11L68 13L66 17L62 14M30 16H34"/><circle cx="13" cy="25" r="6"/><circle cx="57" cy="25" r="6"/></svg>
        <h2>Car information</h2>
      </div>
      <div class="panel offer d-flex align-items-start"><span>Group A - Fiat 500 <em>Or similar</em></span><b>AVIS</b><data value="177.43">£177.43</data></div>
    </div>
  </main>
  <button type="button" class="tab">traveller (1)</button>
</div>
</div>
<script>
const NS='http://www.w3.org/2000/svg';
function add(parent,tag,attrs,text){const e=document.createElementNS(NS,tag);for(const k in attrs)e.setAttribute(k,attrs[k]);if(text)e.textContent=text;parent.appendChild(e);}
// side streets: a jittered lattice joined to its neighbours
let seed=7;const rnd=()=>(seed=(seed*16807)%2147483647)/2147483647;
const pts=[];for(let r=0;r<15;r++){pts[r]=[];for(let c=0;c<42;c++)pts[r][c]=[470+c*55+rnd()*40|0,785+r*52+rnd()*38|0];}
let d='';for(let r=0;r<15;r++)for(let c=0;c<42;c++){const p=pts[r][c],keep=c>14&&c<28?.6:.3;
 if(c<41&&rnd()<keep)d+='M'+p+'L'+pts[r][c+1];if(r<14&&rnd()<keep)d+='M'+p+'L'+pts[r+1][c];}
add(document.getElementById('lanes'),'path',{class:'lane',d});
const names=[['vil',590,876,'Ickenham'],['green',571,847,'e Valley','end'],['green',581,873,'nal Park','end'],['vil',583,948,'Uxbridge','end'],['vil',801,958,'Northolt'],['mid',863,1026,'Greenford'],['town',984,941,'Wembley'],['caps',1048,899,'WEMBLEY PARK'],['vil',1128,929,'Brent Park'],['caps',1219,816,'BRENT CROSS'],['vil',1545,908,'Holloway'],['caps caps-big',1844,953,'STRATFORD'],['caps',2122,830,'NEWBURY PARK'],['town',2395,815,'Romford'],['vil',2506,885,'Hornchurch'],['vil',2600,913,'Upminster'],['mid',2123,911,'Ilford'],['mid',2298,994,'Dagenham'],['vil',2111,1004,'Barking'],['vil',2451,1092,'Rainham'],['dist',1863,1116,'POPLAR'],['dist',1778,1149,'CANARY WHARF'],['dist',1299,1169,'KENSINGTON'],['dist',1459,1186,'WESTMINSTER'],['dist',1299,1280,'FULHAM'],['dist',1547,1355,'BRIXTON'],['dist',1451,1436,'BALHAM'],['dist',1317,1455,'EARLSFIELD'],['dist',1704,1456,'FOREST HILL'],['dist',1553,1512,'WEST NORWOOD'],['vil',1647,1395,'Dulwich'],['vil',1653,1419,'Village'],['dist',1972,1411,'LEE'],['dist',2069,1223,'WOOLWICH'],['vil',2415,1265,'Erith'],['vil',2210,1352,'Welling'],['vil',2268,1393,'Bexleyheath'],['vil',2345,1457,'Bexley'],['town',2511,1428,'Dartford'],['vil',2598,1237,'Purfleet'],['vil',2698,1180,'Aveley','end'],['town',620,1098,'Hayes'],['vil',789,1123,'Southall'],['vil',504,1161,'West Drayton'],['air',551,1218,'Heathrow'],['air',568,1244,'Airport'],['mid',972,1240,'Brentford'],['vil',504,1372,'Stanwell'],['town',781,1359,'Hounslow'],['mid',988,1357,'Richmond'],['vil',691,1437,'Feltham'],['town',875,1436,'Twickenham'],['green',1073,1438,'Richmond'],['green',1104,1464,'Park'],['vil',905,1519,'Teddington'],['city',1492,1146,'Londres']];
for(const [c,x,y,t,a] of names)add(document.getElementById('names'),'text',{class:c,x,y,'text-anchor':a||'start'},t);
const plates=[['A40',585,903],['A40',881,986],['A406',1080,1070],['A40',1295,1093],['A41',1385,921],['A1',1513,814],['A10',1706,995],['A501',1478,1062],['A11',1805,1063],['A13',1785,1102],['A12',1898,1044],['A406',2078,844],['A13',2118,1064],['A1020',2135,1106],['A13',2368,1052],['A13',2532,1140],['A312',751,1128],['A312',742,1240],['M4',706,1199],['M4',980,1199],['A406',1097,1159],['A4',917,1254],['A307',1079,1291],['A205',1162,1332],['A306',1220,1384],['A214',1417,1390],['A3212',1461,1241],['A3205',1495,1279],['A23',1602,1301],['A202',1633,1271],['A2',1729,1238],['A102',1978,1226],['A20',1932,1360],['A2',2119,1368],['A205',1911,1423],['A30',536,1440],['A316',766,1489],['A2',2481,1478],['A282',2686,1331],['A503',1669,824],['M25',472,1128]];
for(const [t,x,y] of plates){const w=12+10*t.length,m=t[0]==='M',g=document.getElementById('plates');
 add(g,'rect',{x:x-w/2,y:y-13,width:w,height:26,rx:4,fill:m?'#7070cf':'#5fa331'});
 add(g,'text',{class:m?'plate plate-m':'plate',x,y:y+7},t);}
</script>
</body>
</html>
